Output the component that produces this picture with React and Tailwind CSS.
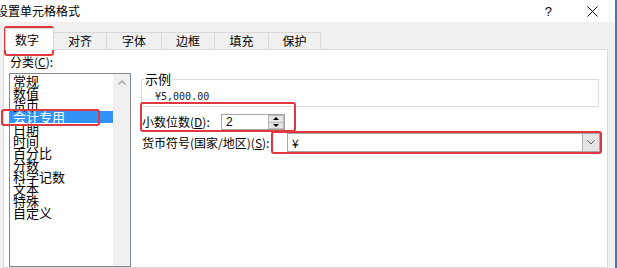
import React from "react";

const categories = ["常规", "数值", "货币", "会计专用", "日期", "时间", "百分比", "分数", "科学记数", "文本", "特殊", "自定义"];
const tabs = [["对齐", "w-[53px]"], ["字体", "w-[55px]"], ["边框", "w-[53px]"], ["填充", "w-[54px]"], ["保护", "w-[52px]"]];

function Mark({ className }) {
  return <div className={"absolute pointer-events-none border-2 border-[#e0383e] rounded-[3px] " + className} />;
}

function TitleBar() {
  return (
    <div className="h-[22px] bg-white flex items-center shrink-0">
      <span className="ml-[-4px] text-[12px] leading-none">设置单元格格式</span>
      <span className="ml-auto text-[13px] leading-none font-['Liberation_Sans',sans-serif]">?</span>
      <svg width="11" height="11" viewBox="0 0 11 11" className="ml-[35px] mr-[17px]">
        <path d="M0.5 0.5 L10.5 10.5 M10.5 0.5 L0.5 10.5" stroke="#000" strokeWidth="1" />
      </svg>
    </div>
  );
}

function Tabs() {
  return (
    <div className="h-[27px] pl-[5px] flex items-end shrink-0">
      <div className="relative z-10 w-[49px] h-[22px] mb-[-1px] bg-white border border-b-0 border-[#d9d9d9] flex items-center pl-[9px] text-[12px]">
        数字
      </div>
      {tabs.map(([t, w]) => (
        <div key={t} className={w + " h-[17px] border-t border-r border-[#d9d9d9] bg-[#f0f0f0] flex items-center justify-center text-[12px]"}>
          {t}
        </div>
      ))}
    </div>
  );
}

function CategoryList() {
  return (
    <div className="w-[127px] pl-[5px] flex flex-col">
      <div className="mt-[3px] h-[18px] leading-[18px] pl-[1px] text-[12px]">
        分类(<span className="underline">C</span>):
      </div>
      <div className="mt-[2px] flex-1 border border-[#828790] flex overflow-hidden">
        <div className="flex-1 pt-[1px]">
          {categories.map((c) => (
            <div
              key={c}
              className={
                "h-[12px] leading-[12px] text-[13px] pl-[3px] whitespace-nowrap " +
                (c === "会计专用" ? "bg-[#3392f5] text-white" : "text-black")
              }
            >
              {c}
            </div>
          ))}
        </div>
        <div className="w-[17px] bg-[#f0f0f0]">
          <div className="h-[17px] flex items-center justify-center">
            <svg width="8" height="5" viewBox="0 0 8 5">
              <path d="M0.5 4.5 L4 1 L7.5 4.5" stroke="#a3a3a3" strokeWidth="1.4" fill="none" />
            </svg>
          </div>
        </div>
      </div>
    </div>
  );
}

function Spinner() {
  return (
    <div className="w-[64px] h-[16px] border border-[#a5a5a5] bg-white flex items-center">
      <span className="pl-[4px] text-[12px] leading-none font-['Liberation_Sans',sans-serif]">2</span>
      <div className="ml-auto w-[16px] h-full flex flex-col">
        <div className="flex-1 bg-[#e5e5e5] border border-[#b9b9b9] flex items-center justify-center">
          <svg width="6" height="3" viewBox="0 0 6 3"><path d="M0 3 L3 0 L6 3 Z" fill="#000" /></svg>
        </div>
        <div className="flex-1 bg-[#e5e5e5] border border-t-0 border-[#b9b9b9] flex items-center justify-center">
          <svg width="6" height="3" viewBox="0 0 6 3"><path d="M0 0 L6 0 L3 3 Z" fill="#000" /></svg>
        </div>
      </div>
    </div>
  );
}

function FormatOptions() {
  return (
    <div className="ml-[10px] w-[459px] flex flex-col">
      <fieldset className="mt-[22px] w-[458px] border border-[#dcdcdc] pl-[2px]">
        <legend className="px-[1px] text-[13px] leading-[14px]">示例</legend>
        <div className="h-[20px] flex items-center ml-[11px] text-[10px] text-[#222] font-['DejaVu_Sans_Mono',monospace]">
          ¥5,000.00
        </div>
      </fieldset>
      <div className="mt-[7px] h-[16px] flex items-center">
        <span className="w-[80px] pl-[1px] text-[12px] whitespace-nowrap">
          小数位数(<span className="underline">D</span>):
        </span>
        <Spinner />
      </div>
      <div className="mt-[3px] h-[19px] flex items-center">
        <span className="w-[146px] pl-[1px] text-[12px] whitespace-nowrap">
          货币符号(国家/地区)(<span className="underline">S</span>):
        </span>
        <div className="w-[313px] h-[19px] border border-[#a5a5a5] bg-white flex items-center">
          <span className="pl-[4px] text-[12px] leading-none">¥</span>
          <div className="ml-auto w-[17px] h-full bg-[#e5e5e5] border-l border-[#b0b0b0] flex items-center justify-center">
            <svg width="8" height="5" viewBox="0 0 8 5">
              <path d="M0.5 0.5 L4 4 L7.5 0.5" stroke="#555" strokeWidth="1" fill="none" />
            </svg>
          </div>
        </div>
      </div>
    </div>
  );
}

export default function App() {
  return (
    <div className="relative w-[617px] h-[268px] overflow-hidden bg-[#f0f0f0] flex text-black font-['Noto_Sans_CJK_SC',sans-serif]">
      <div className="flex-1 flex flex-col">
        <TitleBar />
        <Tabs />
        <div className="ml-[3px] w-[605px] flex-1 min-h-0 border border-[#d9d9d9] bg-white flex">
          <CategoryList />
          <FormatOptions />
        </div>
      </div>
      <div className="w-[2px] bg-[#1c86d9]" />

      <Mark className="left-[4px] top-[26px] w-[50px] h-[30px]" />
      <Mark className="left-[1px] top-[109px] w-[99px] h-[17px]" />
      <Mark className="left-[140px] top-[102px] w-[156px] h-[30px]" />
      <Mark className="left-[271px] top-[131px] w-[331px] h-[23px]" />
    </div>
  );
}
